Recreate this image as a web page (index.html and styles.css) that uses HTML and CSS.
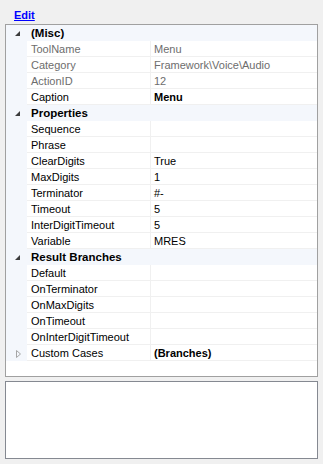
FILE: index.html
```html
<!DOCTYPE html>
<html>
<head>
    <title>Properties</title>
    <meta charset="utf-8">
    <link rel="stylesheet" href="styles.css">
</head>
<body>
    <div class="toolbar">
        <a href="#" class="edit">Edit</a>
    </div>

    <!-- property grid -->
    <div class="grid">
        <div class="cat">
            <span class="mark"><svg width="6" height="6" viewBox="0 0 6 6"><polygon points="5,0 5,5 0,5" fill="#3c3c3c"/></svg></span>
            <span class="cat-name">(Misc)</span>
        </div>
        <div class="row ro"><span class="mark"></span><span class="name">ToolName</span><span class="val">Menu</span></div>
        <div class="row ro"><span class="mark"></span><span class="name">Category</span><span class="val">Framework\Voice\Audio</span></div>
        <div class="row ro"><span class="mark"></span><span class="name">ActionID</span><span class="val">12</span></div>
        <div class="row"><span class="mark"></span><span class="name">Caption</span><span class="val bold">Menu</span></div>

        <div class="cat">
            <span class="mark"><svg width="6" height="6" viewBox="0 0 6 6"><polygon points="5,0 5,5 0,5" fill="#3c3c3c"/></svg></span>
            <span class="cat-name">Properties</span>
        </div>
        <div class="row"><span class="mark"></span><span class="name">Sequence</span><span class="val"></span></div>
        <div class="row"><span class="mark"></span><span class="name">Phrase</span><span class="val"></span></div>
        <div class="row"><span class="mark"></span><span class="name">ClearDigits</span><span class="val">True</span></div>
        <div class="row"><span class="mark"></span><span class="name">MaxDigits</span><span class="val">1</span></div>
        <div class="row"><span class="mark"></span><span class="name">Terminator</span><span class="val">#-</span></div>
        <div class="row"><span class="mark"></span><span class="name">Timeout</span><span class="val">5</span></div>
        <div class="row"><span class="mark"></span><span class="name">InterDigitTimeout</span><span class="val">5</span></div>
        <div class="row"><span class="mark"></span><span class="name">Variable</span><span class="val">MRES</span></div>

        <div class="cat">
            <span class="mark"><svg width="6" height="6" viewBox="0 0 6 6"><polygon points="5,0 5,5 0,5" fill="#3c3c3c"/></svg></span>
            <span class="cat-name">Result Branches</span>
        </div>
        <div class="row"><span class="mark"></span><span class="name">Default</span><span class="val"></span></div>
        <div class="row"><span class="mark"></span><span class="name">OnTerminator</span><span class="val"></span></div>
        <div class="row"><span class="mark"></span><span class="name">OnMaxDigits</span><span class="val"></span></div>
        <div class="row"><span class="mark"></span><span class="name">OnTimeout</span><span class="val"></span></div>
        <div class="row"><span class="mark"></span><span class="name">OnInterDigitTimeout</span><span class="val"></span></div>
        <div class="row">
            <span class="mark expand"><svg width="6" height="8" viewBox="0 0 6 8"><polygon points="0.5,0.5 4.5,4 0.5,7.5" fill="none" stroke="#a6a6a6" stroke-width="1"/></svg></span>
            <span class="name">Custom Cases</span><span class="val bold">(Branches)</span>
        </div>
    </div>

    <!-- description box -->
    <div class="desc"></div>
</body>
</html>
```

FILE: styles.css
```css
body {
    margin: 0;
    background: #f0f0f0;
    font-family: "Liberation Sans", Arial, sans-serif;
    font-size: 11px;
    color: #000;
}

.toolbar {
    height: 24px;
    padding-left: 14px;
    box-sizing: border-box;
    padding-top: 9px;
    line-height: 13px;
}

.edit {
    color: #0000ff;
    font-weight: bold;
    font-size: 11px;
}

.grid {
    margin: 0 5px;
    height: 353px;
    box-sizing: border-box;
    border: 1px solid #a0a0a0;
    background: #fff;
}

.cat,
.row {
    display: grid;
    grid-template-columns: 21px 124px 1fr;
    height: 16px;
    line-height: 13px;
}

.cat {
    background: #f4f7fc;
    font-weight: bold;
    font-size: 11.5px;
}

.cat-name {
    grid-column: 2 / 4;
    padding: 2px 0 0 4px;
}

.mark {
    background: #f4f7fc;
    padding-left: 9px;
    padding-top: 6px;
    box-sizing: border-box;
    line-height: 0;
}

.mark.expand {
    padding-left: 10px;
    padding-top: 5px;
}

.name {
    padding: 2px 0 0 4px;
    border-right: 1px solid #f0f0f0;
    border-bottom: 1px solid #f0f0f0;
    white-space: nowrap;
    overflow: hidden;
}

.val {
    padding: 2px 0 0 3px;
    border-bottom: 1px solid #f0f0f0;
    white-space: nowrap;
    overflow: hidden;
}

.ro .name,
.ro .val {
    color: #6d6d6d;
}

.bold {
    font-weight: bold;
}

.desc {
    margin: 4px 5px 0;
    height: 78px;
    box-sizing: border-box;
    border: 1px solid #858991;
    background: #fff;
}
```
